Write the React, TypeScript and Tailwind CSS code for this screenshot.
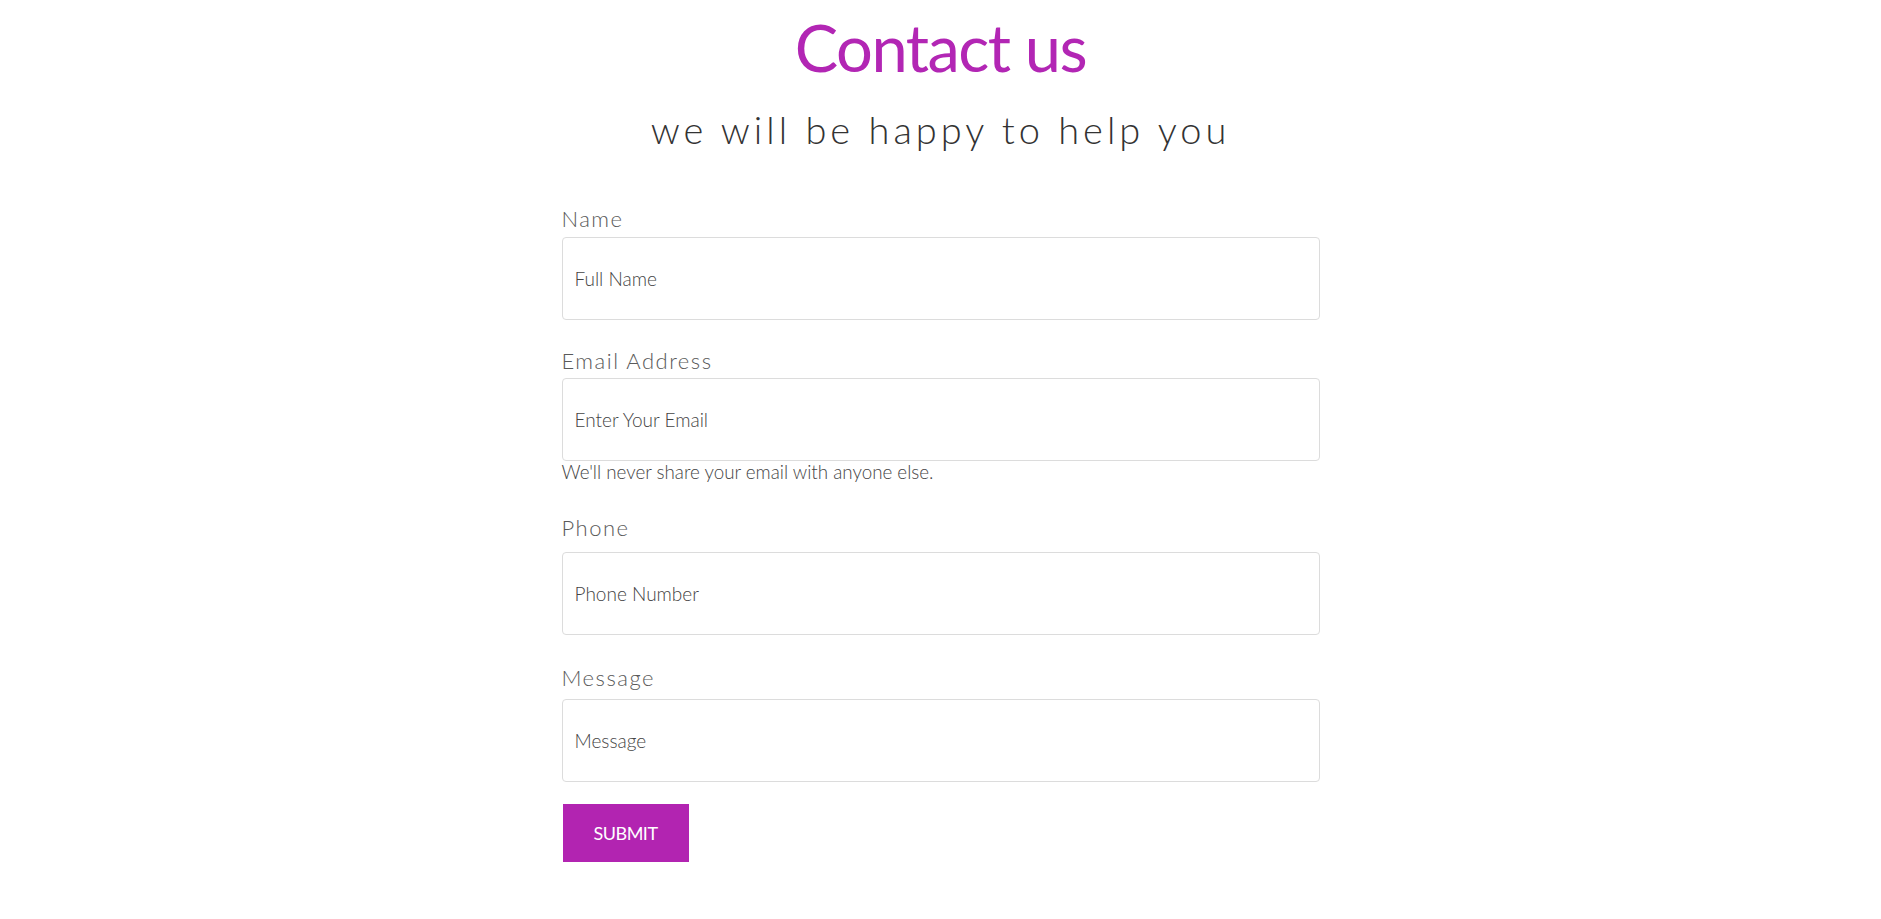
import React from "react";

const font = { fontFamily: "Lato, 'Noto Sans', sans-serif" };

function Field({
  label,
  placeholder,
  labelGap,
  type = "text",
}: {
  label: string;
  placeholder: string;
  labelGap: string;
  type?: string;
}) {
  return (
    <div className="flex flex-col">
      <label className={`text-[22px] leading-[26px] tracking-[1.5px] text-[#5a5a5a] font-light ${labelGap}`}>
        {label}
      </label>
      <input
        type={type}
        placeholder={placeholder}
        className="h-[83px] w-full rounded-[4px] border border-[#dcdcdc] bg-white px-3 text-[19px] font-light text-[#444] placeholder:text-[#444] outline-none"
      />
    </div>
  );
}

export default function App() {
  return (
    <div className="min-h-[919px] w-full bg-white" style={font}>
      <div className="flex flex-col items-center pt-[6px]">
        <h1 className="text-[65px] leading-[82px] font-normal text-[#b226b4] tracking-[-1.5px]">
          Contact us
        </h1>
        <p className="mt-[18px] text-[38px] leading-[46px] font-light tracking-[4px] text-[#333]">
          we will be happy to help you
        </p>
      </div>

      <form className="mx-auto mt-[54px] flex w-[758px] flex-col" onSubmit={(e) => e.preventDefault()}>
        <Field label="Name" placeholder="Full Name" labelGap="mb-[5px]" />

        <div className="mt-[28px]">
          <Field label="Email Address" placeholder="Enter Your Email" labelGap="mb-[4px]" type="email" />
          <p className="text-[18.8px] leading-[22px] text-[#444] font-light">
            We'll never share your email with anyone else.
          </p>
        </div>

        <div className="mt-[32px]">
          <Field label="Phone" placeholder="Phone Number" labelGap="mb-[11px]" />
        </div>

        <div className="mt-[30px]">
          <Field label="Message" placeholder="Message" labelGap="mb-[8px]" />
        </div>

        <div className="mt-[22px] pl-px">
          <button
            type="submit"
            className="h-[58px] w-[126px] bg-[#b224b1] text-[18px] uppercase tracking-[-0.5px] text-white"
          >
            Submit
          </button>
        </div>
      </form>
    </div>
  );
}
